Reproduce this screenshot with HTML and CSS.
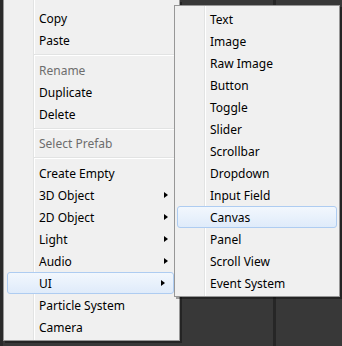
FILE: index.html
```html
<!DOCTYPE html>
<html>
<head>
<meta charset="utf-8">
<link rel="stylesheet" href="styles.css">
</head>
<body>
<div class="editor">
  <div class="divider"></div>
</div>
<div class="menu main-menu">
  <div class="item">Copy</div>
  <div class="item">Paste</div>
  <div class="sep"></div>
  <div class="item disabled">Rename</div>
  <div class="item">Duplicate</div>
  <div class="item">Delete</div>
  <div class="sep"></div>
  <div class="item disabled">Select Prefab</div>
  <div class="sep"></div>
  <div class="item">Create Empty</div>
  <div class="item sub">3D Object</div>
  <div class="item sub">2D Object</div>
  <div class="item sub">Light</div>
  <div class="item sub">Audio</div>
  <div class="item sub hover">UI</div>
  <div class="item">Particle System</div>
  <div class="item">Camera</div>
</div>
<div class="menu sub-menu">
  <div class="item">Text</div>
  <div class="item">Image</div>
  <div class="item">Raw Image</div>
  <div class="item">Button</div>
  <div class="item">Toggle</div>
  <div class="item">Slider</div>
  <div class="item">Scrollbar</div>
  <div class="item">Dropdown</div>
  <div class="item">Input Field</div>
  <div class="item hover">Canvas</div>
  <div class="item">Panel</div>
  <div class="item">Scroll View</div>
  <div class="item">Event System</div>
</div>
</body>
</html>
```
FILE: styles.css
```css
html, body {
  margin: 0;
  padding: 0;
}
body {
  width: 342px;
  height: 346px;
  background: #383838;
  position: relative;
  overflow: hidden;
  font-family: "Noto Sans", "Noto Sans CJK SC", sans-serif;
  font-size: 12px;
  color: #000;
}
.editor {
  position: absolute;
  inset: 0;
  border-left: 3px solid #2a2a2a;
}
.divider {
  position: absolute;
  left: 270px;
  top: 0;
  bottom: 0;
  width: 3px;
  background: #262626;
}
.menu {
  position: absolute;
  background-color: #f0f0f0;
  border: 1px solid #979797;
  box-shadow: 2px 2px 0 rgba(0,0,0,0.35);
  display: flex;
  flex-direction: column;
  padding: 2px;
  box-sizing: border-box;
  background-image: linear-gradient(to right, transparent 29px, #e2e3e3 29px, #e2e3e3 30px, #fff 30px, #fff 31px, transparent 31px);
}
.main-menu {
  left: 3px;
  top: 0;
  width: 177px;
  height: 341px;
  padding-top: 7px;
  border-top: none;
}
.sub-menu {
  left: 174px;
  top: 5px;
  width: 166px;
  height: 292px;
}
.item {
  height: 22px;
  line-height: 22px;
  padding-left: 32px;
  position: relative;
  white-space: nowrap;
  border: 1px solid transparent;
  border-radius: 3px;
  box-sizing: border-box;
}
.item.disabled {
  color: #6d6d6d;
}
.item.sub::after {
  content: "";
  position: absolute;
  right: 8px;
  top: 7px;
  border-left: 4px solid #000;
  border-top: 3.5px solid transparent;
  border-bottom: 3.5px solid transparent;
}
.item.hover {
  border-color: #aeccf1;
  background: linear-gradient(#f2f7fd, #dfebfa);
}
.main-menu .item.hover {
  margin-left: 1px;
  margin-right: 3px;
  padding-left: 31px;
}
.sep {
  height: 8px;
  margin-left: 28px;
  display: flex;
  flex-direction: column;
  justify-content: center;
}
.sep::before {
  content: "";
  height: 1px;
  background: #e2e3e3;
  border-bottom: 1px solid #fff;
}
```
